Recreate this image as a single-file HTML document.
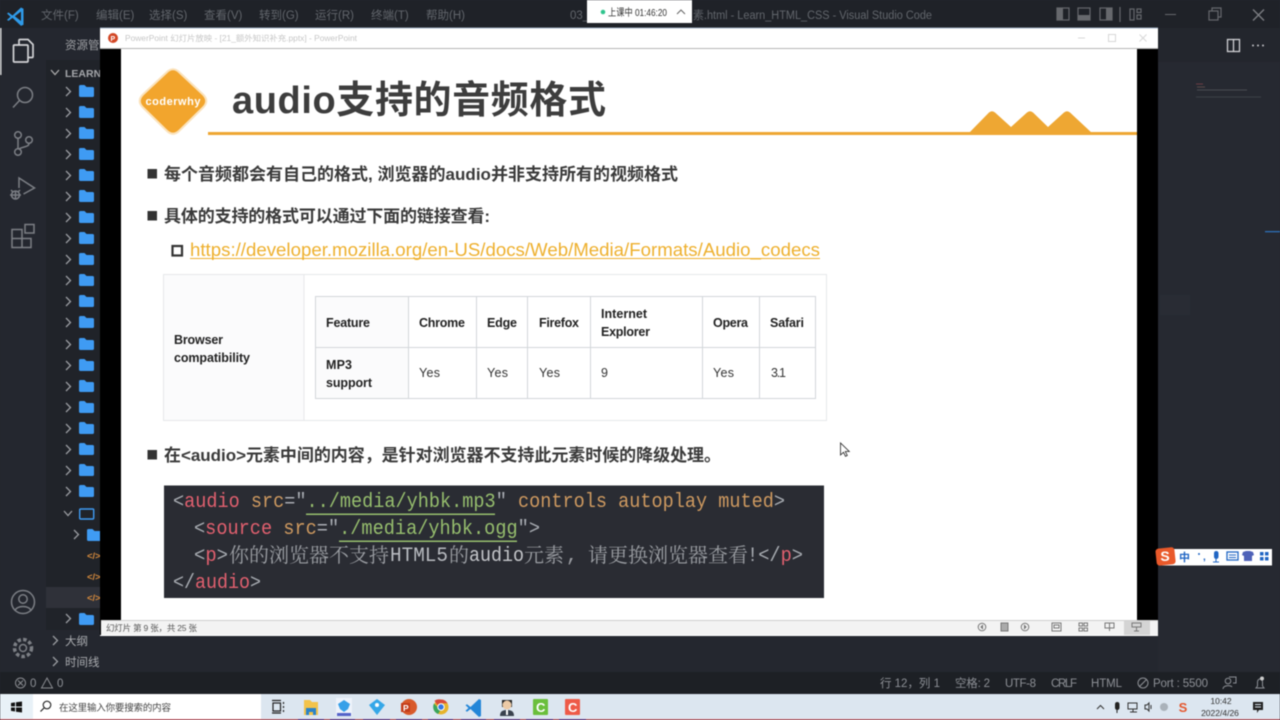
<!DOCTYPE html>
<html lang="zh"><head><meta charset="utf-8"><title>audio</title>
<style>
html,body{margin:0;padding:0;width:1280px;height:720px;overflow:hidden;background:#24272f}
svg{display:block;filter:blur(.55px)}
text{font-family:"Liberation Sans","Noto Sans CJK SC",sans-serif;dominant-baseline:alphabetic}
.m{font-size:11.5px;fill:#62666c}
.s{font-size:11.5px;fill:#8d9096}
.b{font-size:17px;font-weight:bold;fill:#3a3a3a}
.t{font-size:12.5px;fill:#333}
.th{font-size:12.5px;fill:#222;font-weight:bold}
.c text,.c{font-family:"Liberation Mono","Noto Sans CJK SC",monospace;font-size:20px}
.ic{fill:none;stroke:#7c7f85;stroke-width:1.500}
.tl{stroke:#d3d6da;stroke-width:1;fill:none}
.tl2{stroke:#e6e8ea;stroke-width:1;fill:none}
</style></head><body>
<svg width="1280" height="720" viewBox="0 0 1280 720" xmlns="http://www.w3.org/2000/svg">
<defs>
<g id="f"><path d="M0 1.500a1.500 1.500 0 0 1 1.500-1.500h4l2 2h6a1.500 1.500 0 0 1 1.500 1.500v7a1.500 1.500 0 0 1-1.500 1.500h-12a1.500 1.500 0 0 1-1.500-1.500z" fill="#3f9bf3"/></g>
<path id="cr" d="M0 0l4.500 4.500L0 9" fill="none" stroke="#9a9ca1" stroke-width="1.300"/>
</defs>

<rect width="1280" height="720" fill="#24272f"/>
<rect width="1280" height="28" fill="#1f2228"/>
<rect x="46" y="60" width="54" height="612" fill="#202329"/>
<rect x="46" y="28" width="54" height="32" fill="#24272f"/>
<rect x="46" y="587" width="54" height="21" fill="#2f3139"/>
<rect x="46" y="630" width="54" height="42" fill="#24272f"/>
<rect x="1158" y="62" width="122" height="610" fill="#262931"/>
<rect x="1158" y="28" width="122" height="34" fill="#23262d"/>

<!-- vscode logo -->
<path d="M21 7.500l-8.500 8-4-3-1.500 1 3.500 3.200-3.500 3.200 1.500 1 4-3 8.500 8 2.500-1.200V8.700z M21 11.500v9.500l-6.200-4.700z" fill="#2f9ae8" fill-rule="evenodd"/>

<!-- menu -->
<text class="m" x="41" y="19">文件(F)</text><text class="m" x="96" y="19">编辑(E)</text><text class="m" x="149" y="19">选择(S)</text><text class="m" x="204" y="19">查看(V)</text><text class="m" x="259" y="19">转到(G)</text><text class="m" x="315" y="19">运行(R)</text><text class="m" x="371" y="19">终端(T)</text><text class="m" x="426" y="19">帮助(H)</text>
<text class="m" x="570" y="19">03_</text>
<text class="m" x="693" y="19" textLength="239" lengthAdjust="spacingAndGlyphs">素.html - Learn_HTML_CSS - Visual Studio Code</text>

<!-- timer -->
<rect x="587" y="0" width="105" height="23" fill="#fff"/>
<circle cx="603" cy="12" r="2.300" fill="#2fc48d"/>
<text x="608" y="16" font-size="10" fill="#333" textLength="59" lengthAdjust="spacingAndGlyphs">上课中 01:46:20</text>
<path d="M677 14l4-4 4 4" fill="none" stroke="#666" stroke-width="1"/>

<!-- top right -->
<g fill="none" stroke="#66686d" stroke-width="1.200">
<rect x="1057" y="8" width="12" height="12"/><rect x="1078" y="8" width="12" height="12"/><rect x="1100" y="8" width="12" height="12"/>
<rect x="1130" y="9" width="4" height="11"/><rect x="1137" y="9" width="4" height="3.500"/><rect x="1137" y="15" width="4" height="4"/>
<path d="M1120 7v15"/><path d="M1165 14.500h11" stroke-width="1"/>
<rect x="1209" y="11" width="9" height="9"/><path d="M1212 11v-3h9v9h-3"/>
<path d="M1253 9.500l11 11m0-11l-11 11" stroke="#7d7f84" stroke-width="1.300"/>
</g>
<rect x="1057" y="8" width="6" height="12" fill="#66686d"/><rect x="1078" y="15" width="12" height="5" fill="#66686d"/><rect x="1106" y="8" width="6" height="12" fill="#66686d"/>

<!-- split / more -->
<g fill="none" stroke="#d0d1d4" stroke-width="1.300"><rect x="1227.500" y="39.500" width="12" height="12"/><path d="M1233.500 39.500v12"/></g>
<g fill="#c0c1c4"><circle cx="1253" cy="45.500" r="1"/><circle cx="1258" cy="45.500" r="1"/><circle cx="1263" cy="45.500" r="1"/></g>

<!-- activity bar -->
<rect x="0" y="28" width="1.500" height="47" fill="#d8d8d8"/>
<g fill="none" stroke="#d2d3d6" stroke-width="1.700">
<path d="M19 45v-4.500a1 1 0 0 1 1-1h8l5 5v12a1 1 0 0 1-1 1h-4"/>
<rect x="13.500" y="45" width="14.500" height="17" rx="1"/>
</g>
<g class="ic">
<circle cx="25" cy="95" r="7.500"/><path d="M19.500 100.500l-6.500 7"/>
<circle cx="18" cy="135" r="3.300"/><circle cx="18" cy="152" r="3.300"/><circle cx="29" cy="140" r="3.300"/><path d="M18 138.500v10M29 143.500c0 4-8 3-10.500 6"/>
<path d="M19 188v-10l15.500 10-11 6"/><circle cx="15.500" cy="195" r="4"/><path d="M15.500 191v8M10 195h11M11 190l2 2M20 190l-2 2"/>
<path d="M12 229.500h10v18H12zM12 238.500h19v9h-9.500"/><rect x="25" y="224.500" width="9" height="8.500"/>
<circle cx="23" cy="602" r="11.500"/><circle cx="23" cy="599" r="4.200"/><path d="M15 611c1-6 15-6 16 0"/>
<circle cx="23" cy="648" r="3.500"/><circle cx="23" cy="648" r="8.500" stroke-width="3.500" stroke-dasharray="3.500 2.200"/>
</g>

<!-- sidebar -->
<text class="s" x="65" y="49" style="fill:#a0a2a6">资源管理器</text>
<path d="M51 70l4 4.500 4-4.500" fill="none" stroke="#aaa" stroke-width="1.300"/>
<text x="65" y="77" font-size="10.500" font-weight="bold" fill="#a5a7ab">LEARN_HTML</text>

<g id="rows">
<use href="#cr" x="66" y="87"/><use href="#f" x="79" y="85"/>
<use href="#cr" x="66" y="108"/><use href="#f" x="79" y="106"/>
<use href="#cr" x="66" y="129"/><use href="#f" x="79" y="127"/>
<use href="#cr" x="66" y="150"/><use href="#f" x="79" y="148"/>
<use href="#cr" x="66" y="171"/><use href="#f" x="79" y="169"/>
<use href="#cr" x="66" y="192"/><use href="#f" x="79" y="190"/>
<use href="#cr" x="66" y="213"/><use href="#f" x="79" y="211"/>
<use href="#cr" x="66" y="234"/><use href="#f" x="79" y="232"/>
<use href="#cr" x="66" y="255"/><use href="#f" x="79" y="253"/>
<use href="#cr" x="66" y="276"/><use href="#f" x="79" y="274"/>
<use href="#cr" x="66" y="297"/><use href="#f" x="79" y="295"/>
<use href="#cr" x="66" y="318"/><use href="#f" x="79" y="316"/>
<use href="#cr" x="66" y="340"/><use href="#f" x="79" y="338"/>
<use href="#cr" x="66" y="361"/><use href="#f" x="79" y="359"/>
<use href="#cr" x="66" y="382"/><use href="#f" x="79" y="380"/>
<use href="#cr" x="66" y="403"/><use href="#f" x="79" y="401"/>
<use href="#cr" x="66" y="424"/><use href="#f" x="79" y="422"/>
<use href="#cr" x="66" y="445"/><use href="#f" x="79" y="443"/>
<use href="#cr" x="66" y="466"/><use href="#f" x="79" y="464"/>
<use href="#cr" x="66" y="487"/><use href="#f" x="79" y="485"/>
<path d="M64 511l4 4.500 4-4.500" fill="none" stroke="#9a9ca1" stroke-width="1.300"/>
<rect x="79.700" y="509" width="14" height="10" rx="1" fill="none" stroke="#3f9bf3" stroke-width="1.400"/>
<use href="#cr" x="74" y="530"/><use href="#f" x="87" y="529"/>
<use href="#cr" x="66" y="614"/><use href="#f" x="79" y="613"/>
</g>
<g font-size="9.500" font-weight="bold" fill="#d68a3c">
<text x="87" y="559">&lt;/&gt;</text><text x="87" y="580">&lt;/&gt;</text><text x="87" y="601">&lt;/&gt;</text>
</g>
<use href="#cr" x="53" y="636"/><text class="s" x="65" y="645" style="fill:#a9abaf">大纲</text>
<use href="#cr" x="53" y="657"/><text class="s" x="65" y="666" style="fill:#a9abaf">时间线</text>

<!-- minimap -->
<g stroke-width="1" fill="none">
<path d="M1196 84h7" stroke="#6c3e44"/><path d="M1197 87h8" stroke="#5b4a4a"/><path d="M1197 90h50" stroke="#4a4c52"/><path d="M1196 97h65" stroke="#3d4047"/>
</g>
<rect x="1265" y="231" width="15" height="1.300" fill="#2d6fb5"/>
<rect x="1160" y="295" width="30" height="20" fill="#292c34"/>

<!-- PPT window -->
<rect x="100" y="28" width="1058" height="607" fill="#000"/>
<rect x="100" y="28" width="1058" height="20" fill="#fff"/>
<rect x="100" y="48" width="1058" height="1" fill="#b5b5b5"/>
<rect x="100" y="27.500" width="1058" height="1" fill="#9fb0c4"/>
<circle cx="113" cy="38" r="5" fill="#d24726"/><text x="110.500" y="41" font-size="7" font-weight="bold" fill="#fff">P</text>
<text x="125" y="41" font-size="8" fill="#c6c6c6" textLength="232" lengthAdjust="spacingAndGlyphs">PowerPoint 幻灯片放映 - [21_额外知识补充.pptx] - PowerPoint</text>
<g stroke="#d8d8d8" fill="none"><path d="M1078 38h7"/><rect x="1108.500" y="34.500" width="7" height="7"/><path d="M1139.500 34.500l7 7m0-7l-7 7"/></g>

<!-- slide -->
<rect x="121" y="49" width="1016" height="571" fill="#fff"/>

<path d="M166.500 73q6.500-6.500 13 0L203 95q6.500 6.500 0 13l-23.500 23q-6.500 6.500-13 0L143 108q-6.500-6.500 0-13z" fill="#f2a52d" stroke="#fbe3bd" stroke-width="2" transform="translate(0 -.5)"/>
<text x="173" y="105" font-size="11" font-weight="bold" fill="#fff" text-anchor="middle" textLength="55">coderwhy</text>

<text x="232" y="113" font-size="38" font-weight="bold" fill="#3d3d3d" textLength="374">audio支持的音频格式</text>
<rect x="208" y="132" width="929" height="3" fill="#eea733"/>
<path d="M968 134l21-21.500q3-2.500 6 0l16 14.500 16-14.500q3-2.500 6 0l15 14.500 16-14.500q3-2.500 6 0l23 21.500z" fill="#eea733"/>

<rect x="147.500" y="169" width="9.500" height="9.500" fill="#333"/>
<text class="b" x="164" y="180" textLength="514">每个音频都会有自己的格式, 浏览器的audio并非支持所有的视频格式</text>
<rect x="147.500" y="211" width="9.500" height="9.500" fill="#333"/>
<text class="b" x="164" y="222" textLength="326">具体的支持的格式可以通过下面的链接查看:</text>
<rect x="172.500" y="246" width="9.500" height="9.500" fill="none" stroke="#333" stroke-width="2.200"/>
<text x="190" y="256" font-size="18" fill="#eeb02e" textLength="630" lengthAdjust="spacingAndGlyphs">https://developer.mozilla.org/en-US/docs/Web/Media/Formats/Audio_codecs</text>
<rect x="190" y="258" width="630" height="1" fill="#eeb02e"/>

<!-- table -->
<rect x="164" y="274" width="140" height="147" fill="#fbfbfc"/>
<rect x="316" y="297" width="92" height="102" fill="#fbfbfc"/>
<path class="tl2" d="M163.500 274.500H827M163.500 420.500H827M163.500 274v147M304 274v147M826.500 274v147"/>
<path class="tl" d="M315.500 296.500H816M315.500 347.500H816M315.500 398.500H816M315.500 296v103M408.500 296v103M476.500 296v103M527.500 296v103M590.500 296v103M702.500 296v103M759.500 296v103M815.500 296v103"/>
<text class="th" x="174" y="344" textLength="49">Browser</text>
<text class="th" x="174" y="362" textLength="76">compatibility</text>
<text class="th" x="326" y="327" textLength="44">Feature</text>
<text class="th" x="419" y="327" textLength="46">Chrome</text>
<text class="th" x="487" y="327" textLength="30">Edge</text>
<text class="th" x="539" y="327" textLength="40">Firefox</text>
<text class="th" x="601" y="318" textLength="46">Internet</text>
<text class="th" x="601" y="336" textLength="49">Explorer</text>
<text class="th" x="713" y="327" textLength="35">Opera</text>
<text class="th" x="770" y="327" textLength="34">Safari</text>
<text class="th" x="326" y="369" textLength="26">MP3</text>
<text class="th" x="326" y="387" textLength="46">support</text>
<text class="t" x="419" y="377" textLength="21">Yes</text>
<text class="t" x="487" y="377" textLength="21">Yes</text>
<text class="t" x="539" y="377" textLength="21">Yes</text>
<text class="t" x="601" y="377">9</text>
<text class="t" x="713" y="377" textLength="21">Yes</text>
<text class="t" x="771" y="377" textLength="15">3.1</text>

<rect x="147.500" y="450" width="9.500" height="9.500" fill="#333"/>
<text class="b" x="164" y="461" textLength="557">在&lt;audio&gt;元素中间的内容，是针对浏览器不支持此元素时候的降级处理。</text>

<!-- cursor -->
<path d="M840.500 443v12l3-2.700 2 4 1.800-.9-2-3.900h4z" fill="#fff" stroke="#222" stroke-width=".8"/>

<!-- code -->
<rect x="164" y="485.500" width="660" height="112.500" fill="#2a2c33"/>
<g class="c">
<text y="507" x="173" fill="#a9adb3" textLength="612" lengthAdjust="spacingAndGlyphs">&lt;<tspan fill="#e2606f">audio</tspan> <tspan fill="#cf9a60">src</tspan>="<tspan fill="#97bf6e">../media/yhbk.mp3</tspan>" <tspan fill="#cf9a60">controls</tspan> <tspan fill="#cf9a60">autoplay</tspan> <tspan fill="#cf9a60">muted</tspan>&gt;</text>
<text y="534" x="194" fill="#a9adb3" textLength="346" lengthAdjust="spacingAndGlyphs">&lt;<tspan fill="#e2606f">source</tspan> <tspan fill="#cf9a60">src</tspan>="<tspan fill="#97bf6e">./media/yhbk.ogg</tspan>"&gt;</text>
<text y="561" x="194" fill="#a9adb3" textLength="34" lengthAdjust="spacingAndGlyphs">&lt;<tspan fill="#e2606f">p</tspan>&gt;</text>
<text y="562" x="229" fill="#9b9ea3" style="font-family:'Noto Serif CJK SC','Noto Sans CJK SC',serif">你的浏览器不支持</text>
<text y="561" x="390" fill="#b8bbc0" textLength="58" lengthAdjust="spacingAndGlyphs">HTML5</text>
<text y="562" x="449" fill="#9b9ea3" style="font-family:'Noto Serif CJK SC',serif">的</text>
<text y="561" x="469" fill="#c4c6ca" textLength="55" lengthAdjust="spacingAndGlyphs">audio</text>
<text y="562" x="524" fill="#9b9ea3" style="font-family:'Noto Serif CJK SC',serif">元素</text>
<text y="561" x="566" fill="#9b9ea3">,</text>
<text y="562" x="588" fill="#9b9ea3" style="font-family:'Noto Serif CJK SC',serif">请更换浏览器查看</text>
<text y="561" x="747" fill="#a9adb3" textLength="56" lengthAdjust="spacingAndGlyphs">!&lt;/<tspan fill="#e2606f">p</tspan>&gt;</text>
<text y="588" x="173" fill="#a9adb3" textLength="88" lengthAdjust="spacingAndGlyphs">&lt;/<tspan fill="#e2606f">audio</tspan>&gt;</text>
</g>
<rect x="306" y="513.500" width="189" height="1.500" fill="#97bf6e"/>
<rect x="339" y="540.500" width="178" height="1.500" fill="#97bf6e"/>

<!-- ppt status -->
<rect x="101" y="620" width="1057" height="15" fill="#f3f3f3"/>
<rect x="101" y="620" width="1057" height="1" fill="#cfcfcf"/>
<rect x="100" y="635" width="1058" height="1" fill="#fff"/>
<text x="106" y="631" font-size="8.500" fill="#555" textLength="91">幻灯片 第 9 张，共 25 张</text>
<rect x="1124" y="621" width="26" height="14" fill="#d4d4d4"/>
<g fill="none" stroke="#777" stroke-width="1">
<circle cx="982" cy="627" r="3.800"/><path d="M983 625l-2 2 2 2" fill="#777"/><circle cx="1025" cy="627" r="3.800"/><path d="M1024 625l2 2-2 2" fill="#777"/>
<rect x="1001" y="623" width="7" height="8" fill="#aaa"/>
<rect x="1052" y="623" width="9" height="8"/><path d="M1054 625h5v3h-5z"/>
<rect x="1079" y="623" width="3.500" height="3"/><rect x="1084" y="623" width="3.500" height="3"/><rect x="1079" y="628" width="3.500" height="3"/><rect x="1084" y="628" width="3.500" height="3"/>
<path d="M1105 623h9v5h-9zM1109.500 623v8"/>
<path d="M1132 623h9v4h-9zM1136.500 627v4M1134 631h5"/>
</g>

<!-- sogou bar -->
<rect x="1160" y="549" width="112" height="16.500" fill="#fff"/>
<rect x="1156" y="548" width="19" height="17" rx="3" fill="#e9592a" transform="rotate(-6 1165 556)"/>
<text x="1165" y="561" font-size="14" font-weight="bold" fill="#fff" text-anchor="middle">S</text>
<g fill="#2166c4">
<text x="1179" y="561" font-size="11" font-weight="bold">中</text>
<circle cx="1199" cy="554" r="1"/><text x="1203" y="560" font-size="10" font-weight="bold">,</text>
<rect x="1214" y="551" width="4.500" height="8" rx="2.200"/><path d="M1216 559v3h-3h6" stroke="#2166c4" fill="none"/>
<rect x="1227" y="552" width="11" height="8" fill="none" stroke="#2166c4" stroke-width="1.300"/><path d="M1229 555h7M1229 557.500h7" stroke="#2166c4"/>
<path d="M1243 552l3-1h4l3 1 1 3-2 1v5h-8v-5l-2-1z" fill="#4f62b8"/>
<rect x="1260" y="552" width="3.500" height="3.500"/><rect x="1265" y="552" width="3.500" height="3.500"/><rect x="1260" y="557" width="3.500" height="3.500"/><rect x="1265" y="557" width="3.500" height="3.500"/>
</g>

<!-- status bar -->
<rect x="0" y="672" width="1280" height="22" fill="#1d2025"/>
<g class="ic" style="stroke:#8a8c91;stroke-width:1">
<circle cx="20.500" cy="683" r="5"/><path d="M18 680.500l5 5m0-5l-5 5"/>
<path d="M47 678l5.500 10h-11z"/>
</g>
<text class="s" x="30" y="687">0</text><text class="s" x="57" y="687">0</text>
<text class="s" x="880" y="687" textLength="60">行 12，列 1</text>
<text class="s" x="955" y="687" textLength="35">空格: 2</text>
<text class="s" x="1005" y="687" textLength="31">UTF-8</text>
<text class="s" x="1051" y="687" textLength="26">CRLF</text>
<text class="s" x="1091" y="687" textLength="31">HTML</text>
<circle cx="1143" cy="683" r="5" fill="none" stroke="#8d9096"/><path d="M1139.500 686.500l7-7" stroke="#8d9096"/>
<text class="s" x="1153" y="687" textLength="55">Port : 5500</text>
<g fill="none" stroke="#8d9096"><circle cx="1228" cy="681" r="2.800"/><path d="M1223 689c0-4 8-4 9-2M1229 677h7v6h-3"/>
<path d="M1256 688h8l-1.500-2v-4a2.500 3 0 0 0-5 0v4z"/></g>
<circle cx="1262" cy="678.500" r="2" fill="#ccc"/>

<!-- taskbar -->
<rect x="0" y="694" width="1280" height="26" fill="#dce6f0"/>
<rect x="0" y="694" width="33" height="26" fill="#e8f1f7"/>
<rect x="33" y="694" width="228" height="26" fill="#fff"/>
<rect x="0" y="719" width="1280" height="1" fill="#e0707a"/>
<g fill="#7a4aa0"><rect x="298" y="719" width="26" height="1"/><rect x="330" y="719" width="25" height="1"/><rect x="363" y="719" width="27" height="1"/><rect x="396" y="719" width="26" height="1"/><rect x="428" y="719" width="25" height="1"/><rect x="461" y="719" width="25" height="1"/><rect x="494" y="719" width="26" height="1"/><rect x="526" y="719" width="27" height="1"/><rect x="559" y="719" width="27" height="1"/></g>
<g fill="#111">
<path d="M11 703l4-.6v4h-4zM16 702.300l6-.8v5h-6zM11 707.500h4v4l-4-.6zM16 707.500h6v5l-6-.8z"/>
</g>
<circle cx="47" cy="705" r="3.800" fill="none" stroke="#222" stroke-width="1.100"/><path d="M44 708l-3.500 3.500" stroke="#222" stroke-width="1.200"/>
<text x="59" y="711" font-size="9.500" fill="#444" textLength="112">在这里输入你要搜索的内容</text>
<g fill="none" stroke="#222" stroke-width="1.200"><rect x="273" y="703" width="7.500" height="8"/><path d="M272 700.500h9M272 713h9M283.500 702v2M283.500 706v2M283.500 710v2"/></g>
<path d="M304 700h6l2 2h6v13h-14z" fill="#f3c34a"/><path d="M306 708h10v7h-3v-3h-4v3h-3z" fill="#2a83c9"/>
<rect x="336" y="698" width="16" height="18" fill="#eef3fb"/><path d="M344 700l6 4-2 5-4 3-4-3-2-5z" fill="#37a0e8"/><rect x="337" y="713" width="14" height="3" fill="#5463c9"/>
<path d="M377 699l8 6-8 10-8-10z" fill="#35a7e8"/><circle cx="377" cy="705" r="2" fill="#fff"/>
<circle cx="409" cy="707" r="8" fill="#d85a2b"/><rect x="401" y="703" width="9" height="9" fill="#c43e1c"/><text x="403" y="711" font-size="8.500" font-weight="bold" fill="#fff">P</text>
<circle cx="441" cy="707" r="7.500" fill="#e6b42c"/><path d="M441 699.500a7.500 7.500 0 0 1 6.500 3.800h-6.500a4 4 0 0 0-3.500 2l-3-4.500a7.500 7.500 0 0 1 6.500-1.300z" fill="#d8493a"/><path d="M434 703.500a7.500 7.500 0 0 0 4 10.500l3-4.500-3-2z" fill="#3ba55c"/><circle cx="441" cy="707" r="3.200" fill="#3577e4" stroke="#fff"/>
<path d="M479 699l-8.500 8-3.500-2.700-1.500 1 3 2.700-3 2.700 1.500 1 3.500-2.700 8.500 8 2-1v-16z" fill="#2386d8"/>
<rect x="502" y="700" width="10" height="7" fill="#222"/><circle cx="507" cy="705" r="4.500" fill="#eccaa6"/><path d="M500 716c0-5 3-6 7-6s7 1 7 6z" fill="#39424e"/><path d="M506 710h2v5h-2z" fill="#fff"/>
<rect x="533" y="699" width="15" height="16" rx="1" fill="#6abf3c"/><text x="536" y="712" font-size="13" font-weight="bold" fill="#fff">C</text>
<rect x="565" y="699" width="15" height="16" rx="1" fill="#ee5a48"/><text x="568" y="712" font-size="13" font-weight="bold" fill="#fff">C</text>

<!-- tray -->
<path d="M1097 709l3.500-3.500 3.500 3.500" fill="none" stroke="#333" stroke-width="1"/>
<rect x="1115" y="702" width="4.500" height="8" rx="2.200" fill="#222"/><path d="M1117 710v3" stroke="#222"/>
<g fill="none" stroke="#333"><rect x="1128" y="703" width="9" height="6"/><path d="M1133 709v3M1130 712h7"/>
<path d="M1145 705h2l2-2v8l-2-2h-2zM1151 705v4"/></g>
<circle cx="1164" cy="707" r="4" fill="#aab2ba"/>
<text x="1183" y="712" font-size="13" font-weight="bold" fill="#e4572e" text-anchor="middle">S</text>
<text x="1221" y="704" font-size="8.500" fill="#333" text-anchor="middle">10:42</text>
<text x="1220" y="716" font-size="8.500" fill="#333" text-anchor="middle">2022/4/26</text>
<path d="M1253 702h10v8h-4l-2 3v-3h-4z" fill="#222"/><path d="M1255 704.500h6M1255 707h6" stroke="#dce6f0"/>
</svg>
</body></html>
